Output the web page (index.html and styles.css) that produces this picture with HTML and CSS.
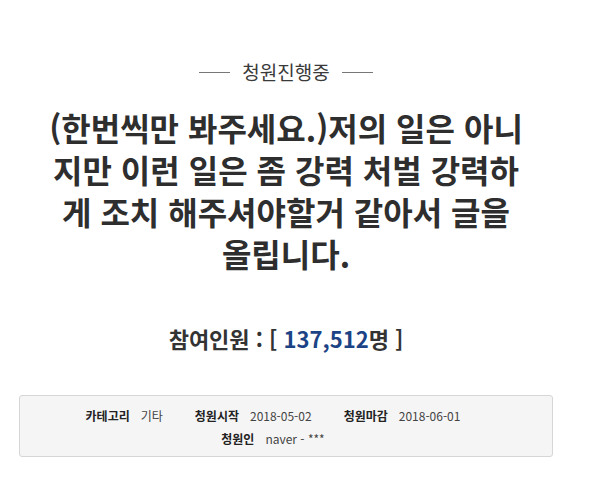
FILE: index.html
```html
<!DOCTYPE html>
<html lang="ko">
<head>
<meta charset="utf-8">
<link rel="stylesheet" href="styles.css">
</head>
<body>
<div class="wrap">
  <div class="status"><span class="dash"></span><span class="status-text">청원진행중</span><span class="dash"></span></div>
  <h1 class="title">(한번씩만 봐주세요.)저의 일은 아니<br>지만 이런 일은 좀 강력 처벌 강력하<br>게 조치 해주셔야할거 같아서 글을<br>올립니다.</h1>
  <p class="count">참여인원 : [ <span class="num">137,512</span>명 ]</p>
  <div class="info">
    <ul class="info-row">
      <li class="item"><span class="label">카테고리</span><span class="value">기타</span></li>
      <li class="item"><span class="label">청원시작</span><span class="value">2018-05-02</span></li>
      <li class="item"><span class="label">청원마감</span><span class="value">2018-06-01</span></li>
    </ul>
    <ul class="info-row">
      <li class="item"><span class="label">청원인</span><span class="value">naver - ***</span></li>
    </ul>
  </div>
</div>
</body>
</html>
```

FILE: styles.css
```css
html, body {
  margin: 0;
  padding: 0;
  background: #fff;
}
body {
  font-family: "Noto Sans CJK KR", "Noto Sans", sans-serif;
  color: #333;
}
.wrap {
  width: 534px;
  margin-left: 19px;
  padding-top: 60px;
}
.status {
  display: flex;
  justify-content: center;
  align-items: center;
  gap: 12px;
  height: 24px;
  line-height: 24px;
}
.dash {
  display: block;
  width: 31px;
  height: 1px;
  background: #777;
}
.status-text {
  font-size: 19px;
  color: #3a3a3a;
}
.title {
  margin: 22px 0 0;
  font-size: 32px;
  line-height: 42px;
  font-weight: 700;
  text-align: center;
  color: #2e2e2e;
  white-space: nowrap;
}
.count {
  margin: 49px 0 0;
  font-size: 22px;
  line-height: 30px;
  font-weight: 700;
  text-align: center;
  color: #333;
}
.num {
  color: #1b4385;
}
.info {
  margin-top: 42px;
  background: #f5f5f5;
  border: 1px solid #d6d6d6;
  border-radius: 3px;
  padding: 8px 0 7px;
  box-sizing: border-box;
  height: 62px;
}
.info-row {
  list-style: none;
  margin: 0;
  padding: 0 26px 0 0;
  display: flex;
  justify-content: center;
  gap: 32px;
  font-size: 12px;
  line-height: 23px;
  color: #333;
}
.item {
  display: flex;
  gap: 11px;
}
.label {
  font-weight: 700;
  color: #222;
}
.value {
  color: #444;
}
```
